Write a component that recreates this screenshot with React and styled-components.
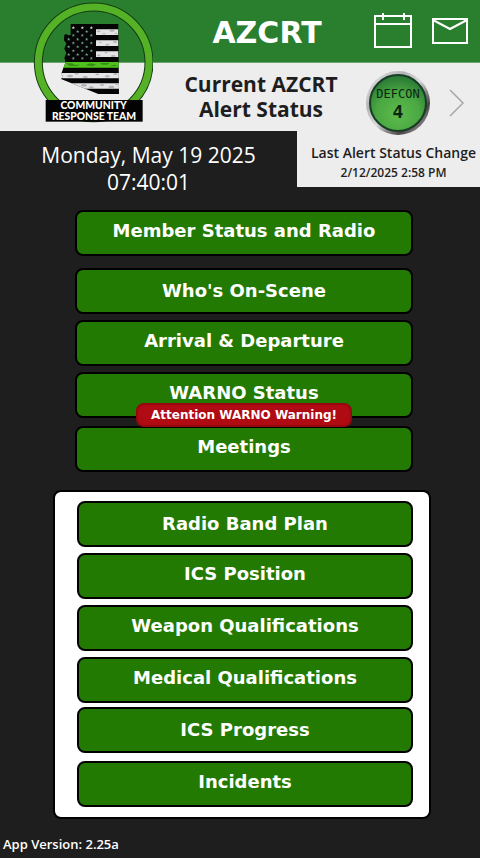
import styled, { createGlobalStyle } from 'styled-components'

const colors = {
  header: '#297f2d',
  light: '#ededed',
  dark: '#1e1e1e',
  button: '#237a02',
  warning: '#b00a12',
}

const bodyFont = "'Open Sans', 'Noto Sans', sans-serif"
const menuFont = "Verdana, 'DejaVu Sans', sans-serif"

const GlobalStyle = createGlobalStyle`
  * {
    box-sizing: border-box;
  }
  body {
    margin: 0;
    background: ${colors.dark};
    font-family: ${bodyFont};
  }
`

const Page = styled.div`
  position: relative;
`

const Logo = styled.svg`
  position: absolute;
  left: 33px;
  top: 0;
  width: 120px;
  height: 124px;
`

const Header = styled.header`
  display: grid;
  grid-template-columns: 170px 1fr 116px;
  align-items: center;
  height: 63px;
  background: ${colors.header};
  border-bottom: 1px solid #69a56c;
`

const Title = styled.h1`
  grid-column: 2;
  margin: 0;
  padding-top: 4px;
  color: #ffffff;
  font: bold 30px/36px ${menuFont};
  text-align: center;
`

const Actions = styled.div`
  display: flex;
  align-items: center;
  gap: 20px;
  padding-left: 10px;
`

const IconButton = styled.button`
  display: flex;
  padding: 0;
  border: 0;
  background: none;
  cursor: pointer;
`

const StatusBar = styled.section`
  display: grid;
  grid-template-columns: 170px 1fr 128px;
  align-items: center;
  height: 68px;
  background: ${colors.light};
`

const StatusTitle = styled.h2`
  grid-column: 2;
  margin: 0;
  color: ${colors.dark};
  font-size: 21px;
  font-weight: bold;
  line-height: 25px;
  text-align: center;
`

/* the badge hangs a little below the bar, over the date card */
const StatusLevel = styled.div`
  position: relative;
  z-index: 1;
  display: flex;
  align-items: center;
  gap: 18px;
  margin-bottom: -6px;
  padding: 6px 0 0 13px;
`

const InfoRow = styled.section`
  display: grid;
  grid-template-columns: 1fr 183px;
`

const Clock = styled.time`
  padding-top: 11px;
  color: #ffffff;
  font-size: 21px;
  line-height: 27px;
  text-align: center;
`

const LastChange = styled.div`
  height: 56px;
  padding: 12px 0 0 10px;
  background: ${colors.light};
  color: ${colors.dark};
  text-align: center;
  line-height: 20px;
`

const LastChangeLabel = styled.div`
  font-size: 14px;
  font-weight: 600;
  white-space: nowrap;
`

const LastChangeDate = styled.div`
  font-size: 12px;
  font-weight: 600;
`

const MainMenu = styled.nav`
  display: flex;
  justify-content: center;
  padding: 14px 0 0 8px;
`

const PanelMenu = styled.nav`
  display: flex;
  justify-content: center;
  padding: 18px 0 0 4px;
`

const Panel = styled.div`
  width: 378px;
  padding: 9px 16px 10px 22px;
  background: #ffffff;
  border: 2px solid #000000;
  border-radius: 8px;
`

const MenuList = styled.ul`
  width: 100%;
  max-width: 338px;
  margin: 0;
  padding: 0;
  list-style: none;
`

const MenuItem = styled.li`
  position: relative;
  margin-bottom: ${({ $gap }) => $gap}px;
`

const MenuButton = styled.button`
  display: block;
  width: 100%;
  height: 46px;
  padding: 0 0 ${({ $low }) => ($low ? 0 : 4)}px;
  background: ${colors.button};
  border: 2px solid #000000;
  border-radius: 8px;
  color: #ffffff;
  font: bold 18px/24px ${menuFont};
  cursor: pointer;
`

const Warning = styled.span`
  position: absolute;
  z-index: 1;
  left: 50%;
  top: 31px;
  width: 216px;
  transform: translateX(-50%);
  background: ${colors.warning};
  border: 2px solid #96080f;
  border-radius: 8px;
  color: #ffffff;
  font: bold 12px/20px ${menuFont};
  text-align: center;
  white-space: nowrap;
  pointer-events: none;
`

const Footer = styled.footer`
  padding: 15px 3px 4px;
  color: #ffffff;
  font-size: 13px;
  font-weight: 600;
  line-height: 20px;
`

const mainItems = [
  { label: 'Member Status and Radio', gap: 12 },
  { label: "Who's On-Scene", gap: 6, low: true },
  { label: 'Arrival & Departure', gap: 6 },
  { label: 'WARNO Status', gap: 8, warning: 'Attention WARNO Warning!' },
  { label: 'Meetings', gap: 0 },
]

const panelItems = [
  { label: 'Radio Band Plan', gap: 6, low: true },
  { label: 'ICS Position', gap: 6 },
  { label: 'Weapon Qualifications', gap: 6 },
  { label: 'Medical Qualifications', gap: 4 },
  { label: 'ICS Progress', gap: 8, low: true },
  { label: 'Incidents', gap: 0 },
]

const starPath = 'M0 -5 L1.4 -1.6 L5 -1.5 L2.2 .8 L3.1 4.4 L0 2.3 L-3.1 4.4 L-2.2 .8 L-5 -1.5 L-1.4 -1.6Z'

const stars = []
for (let row = 0; row < 9; row++) {
  const xs = row % 2 ? [146, 173, 200] : [160, 187, 214]
  xs.forEach((x) => stars.push({ x, y: 83 + row * 11.5 }))
}

// worn patches on the flag stripes
const patches = [
  [236, 94, 4], [252, 101, 3], [276, 92, 5], [288, 100, 3],
  [241, 127, 3], [262, 134, 4], [285, 126, 4],
  [236, 166, 4], [258, 158, 3], [280, 168, 5],
  [150, 228, 6], [170, 221, 4], [196, 231, 5], [232, 223, 4], [262, 229, 5], [286, 222, 4],
  [192, 256, 6], [214, 262, 5], [246, 255, 4], [274, 261, 6], [290, 253, 3],
]

function TeamLogo() {
  return (
    <Logo viewBox="39 0 360 372" role="img" aria-label="Community Response Team">
      <defs>
        <clipPath id="state">
          <path d="M152 72 H295 L297 282 H235 L123 237 L129 229 L124 221 L130 204 L137 187 L133 174 L139 159 L133 146 L139 130 L132 121 L133 104 L139 102 L144 106 L152 105Z" />
        </clipPath>
      </defs>
      <circle cx="221" cy="187" r="166" fill="none" stroke="#143d12" strokeWidth="27" />
      <circle cx="221" cy="187" r="166" fill="none" stroke="#55b226" strokeWidth="21" />
      <g clipPath="url(#state)">
        <rect x="120" y="70" width="180" height="215" fill="#050505" />
        <path d="M228 88H295V105H228Z M228 121H295V138H228Z M228 154H295V171H228Z M120 219H297V235H120Z M120 250H297V266H120Z" fill="#e4e4e6" />
        {patches.map(([x, y, r]) => (
          <ellipse key={`${x}-${y}`} cx={x} cy={y} rx={r * 1.5} ry={r / 1.5} fill="#8c8c90" opacity=".55" />
        ))}
        <path d="M120 186H297V203H120Z" fill="#4fc31c" />
        <path d="M137 190h20l6 4h18l-10 4h-22z M196 196l14-6 18 3-9 6z M240 189h30l-8 5h-16z M268 199l14-5 12 4z" fill="#287014" opacity=".65" />
        {stars.map(({ x, y }) => (
          <path key={`${x}-${y}`} d={starPath} transform={`translate(${x} ${y})`} fill={y < 90 ? '#d8d8d8' : '#6aa08a'} />
        ))}
      </g>
      <rect x="77" y="300" width="291" height="65" fill="#030303" />
      <g fill="#ffffff" fontFamily="Lato, sans-serif" fontWeight="900" fontSize="31" textAnchor="middle">
        <text x="221" y="328">COMMUNITY</text>
        <text x="222" y="360">RESPONSE TEAM</text>
      </g>
    </Logo>
  )
}

function CalendarIcon() {
  return (
    <svg width="38" height="36" viewBox="0 0 38 36" fill="none" stroke="#ffffff" strokeWidth="2">
      <path d="M1 3H37V34H1Z M1 11H37 M9 0V7 M30 0V7" />
    </svg>
  )
}

function MailIcon() {
  return (
    <svg width="36" height="28" viewBox="0 0 36 28" fill="none" stroke="#ffffff" strokeWidth="2">
      <path d="M1 2H35V26H1Z M1 3L18 12L35 3" />
    </svg>
  )
}

function DefconBadge() {
  return (
    <svg width="66" height="66" viewBox="0 0 66 66" role="img" aria-label="DEFCON 4">
      <defs>
        <linearGradient id="rim" x1="0" y1="0" x2="1" y2="1">
          <stop offset="0" stopColor="#f2f2f2" />
          <stop offset=".3" stopColor="#b4b4b4" />
          <stop offset=".5" stopColor="#d9d9d9" />
          <stop offset=".75" stopColor="#4a4446" />
          <stop offset="1" stopColor="#c8c4c6" />
        </linearGradient>
        <radialGradient id="face" cx=".5" cy=".7" r=".65">
          <stop offset="0" stopColor="#5cbb4c" />
          <stop offset=".6" stopColor="#4aa742" />
          <stop offset="1" stopColor="#2c7d35" />
        </radialGradient>
      </defs>
      <circle cx="33" cy="33" r="32" fill="url(#rim)" />
      <circle cx="33" cy="33" r="28" fill="url(#face)" stroke="#173d26" strokeWidth="2" />
      <g fill="#0c2411" fontFamily="'DejaVu Sans Mono', monospace" textAnchor="middle">
        <text x="33" y="28" fontSize="12">DEFCON</text>
        <text x="33" y="48" fontSize="18" fontWeight="bold">4</text>
      </g>
    </svg>
  )
}

function ChevronIcon() {
  return (
    <svg width="16" height="28" viewBox="0 0 16 28" fill="none" stroke="#a8a8a8" strokeWidth="1.500">
      <path d="M1 1L14 14L1 27" />
    </svg>
  )
}

function Menu({ items }) {
  return (
    <MenuList>
      {items.map((item) => (
        <MenuItem key={item.label} $gap={item.gap}>
          <MenuButton type="button" $low={item.low}>
            {item.label}
          </MenuButton>
          {item.warning && <Warning>{item.warning}</Warning>}
        </MenuItem>
      ))}
    </MenuList>
  )
}

function App() {
  return (
    <Page>
      <GlobalStyle />
      <Header>
        <Title>AZCRT</Title>
        <Actions>
          <IconButton type="button" aria-label="Calendar">
            <CalendarIcon />
          </IconButton>
          <IconButton type="button" aria-label="Messages">
            <MailIcon />
          </IconButton>
        </Actions>
      </Header>
      <StatusBar>
        <StatusTitle>
          Current AZCRT
          <br />
          Alert Status
        </StatusTitle>
        <StatusLevel>
          <DefconBadge />
          <IconButton type="button" aria-label="Alert status details">
            <ChevronIcon />
          </IconButton>
        </StatusLevel>
      </StatusBar>
      <InfoRow>
        <Clock>
          Monday, May 19 2025
          <br />
          07:40:01
        </Clock>
        <LastChange>
          <LastChangeLabel>Last Alert Status Change</LastChangeLabel>
          <LastChangeDate>2/12/2025 2:58 PM</LastChangeDate>
        </LastChange>
      </InfoRow>
      <TeamLogo />
      <MainMenu aria-label="Main">
        <Menu items={mainItems} />
      </MainMenu>
      <PanelMenu aria-label="Team">
        <Panel>
          <Menu items={panelItems} />
        </Panel>
      </PanelMenu>
      <Footer>App Version: 2.25a</Footer>
    </Page>
  )
}

export default App
